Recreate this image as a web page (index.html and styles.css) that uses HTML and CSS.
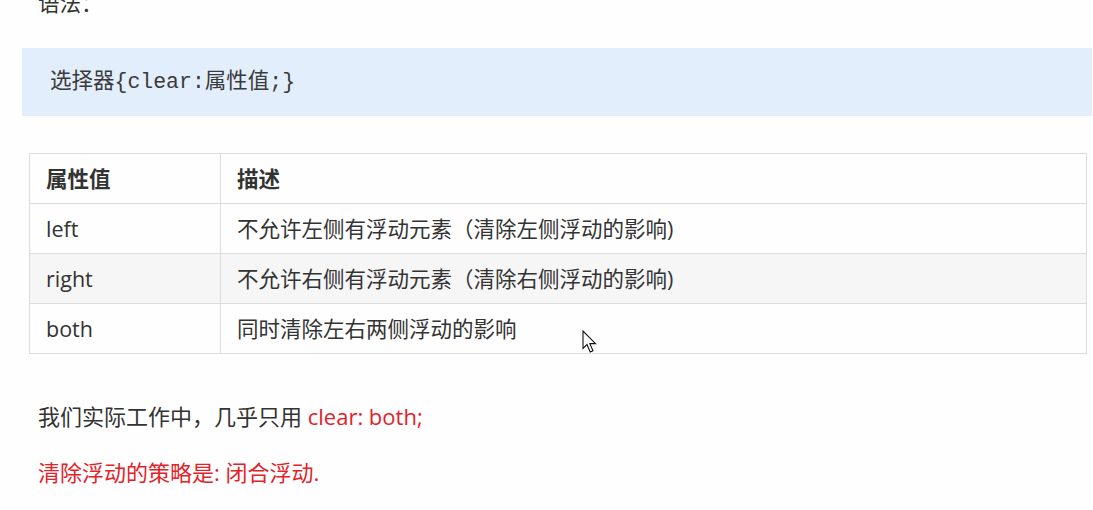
FILE: index.html
```html
<!DOCTYPE html>
<html lang="zh-CN">
<head>
<meta charset="utf-8">
<title>clear</title>
<link rel="stylesheet" href="styles.css">
</head>
<body>
<main class="doc">
  <p class="lead">语法：</p>
  <pre class="code">选择器{clear:属性值;}</pre>
  <table class="props">
    <thead>
      <tr><th class="c1">属性值</th><th>描述</th></tr>
    </thead>
    <tbody>
      <tr><td class="c1">left</td><td>不允许左侧有浮动元素（清除左侧浮动的影响)</td></tr>
      <tr class="alt"><td class="c1">right</td><td>不允许右侧有浮动元素（清除右侧浮动的影响)</td></tr>
      <tr><td class="c1">both</td><td>同时清除左右两侧浮动的影响</td></tr>
    </tbody>
  </table>
  <p class="note">我们实际工作中，几乎只用 <span class="red">clear: both;</span></p>
  <p class="note red">清除浮动的策略是: 闭合浮动.</p>
  <svg class="cursor" width="16" height="24" viewBox="0 0 16 24" aria-hidden="true">
    <path d="M1 1 L1 18.5 L5 14.5 L8.2 22 L11 20.8 L7.9 13.6 L13.5 13.6 Z" fill="#fff" stroke="#111" stroke-width="1.1" stroke-linejoin="miter"/>
  </svg>
</main>
</body>
</html>
```

FILE: styles.css
```css
html, body {
  margin: 0;
  padding: 0;
  background: #fdfefd;
}
body {
  font-family: "Open Sans", "Noto Sans CJK SC", sans-serif;
  color: #333;
  font-size: 21.5px;
  overflow: hidden;
  height: 510px;
}
.doc {
  position: relative;
  margin-left: 22px;
  width: 1070px;
}
.lead {
  margin: -12px 0 0 16px;
  line-height: 30px;
}
.code {
  margin: 30px 0 0 0;
  height: 68px;
  line-height: 68px;
  padding: 0 28px;
  background: #e3eefd;
  font-family: "Liberation Mono", "Noto Sans CJK SC", monospace;
  font-size: 21.5px;
  color: #3a3a3a;
}
.props {
  margin: 37px 0 0 7px;
  width: 1058px;
  border-collapse: collapse;
}
.props th,
.props td {
  border: 1px solid #dcdcdc;
  height: 49px;
  line-height: 49px;
  padding: 0 16px;
  text-align: left;
  vertical-align: middle;
  font-size: 21.5px;
}
.props th {
  font-weight: 700;
  color: #333;
}
.props .c1 {
  width: 158px;
}
.props .alt td {
  background: #f6f6f6;
}
.note {
  margin: 47px 0 0 16px;
  line-height: 30px;
  font-size: 22px;
}
.note + .note {
  margin-top: 26px;
}
.red {
  color: #e3222a;
}
.cursor {
  position: absolute;
  left: 560px;
  top: 342px;
}
```
